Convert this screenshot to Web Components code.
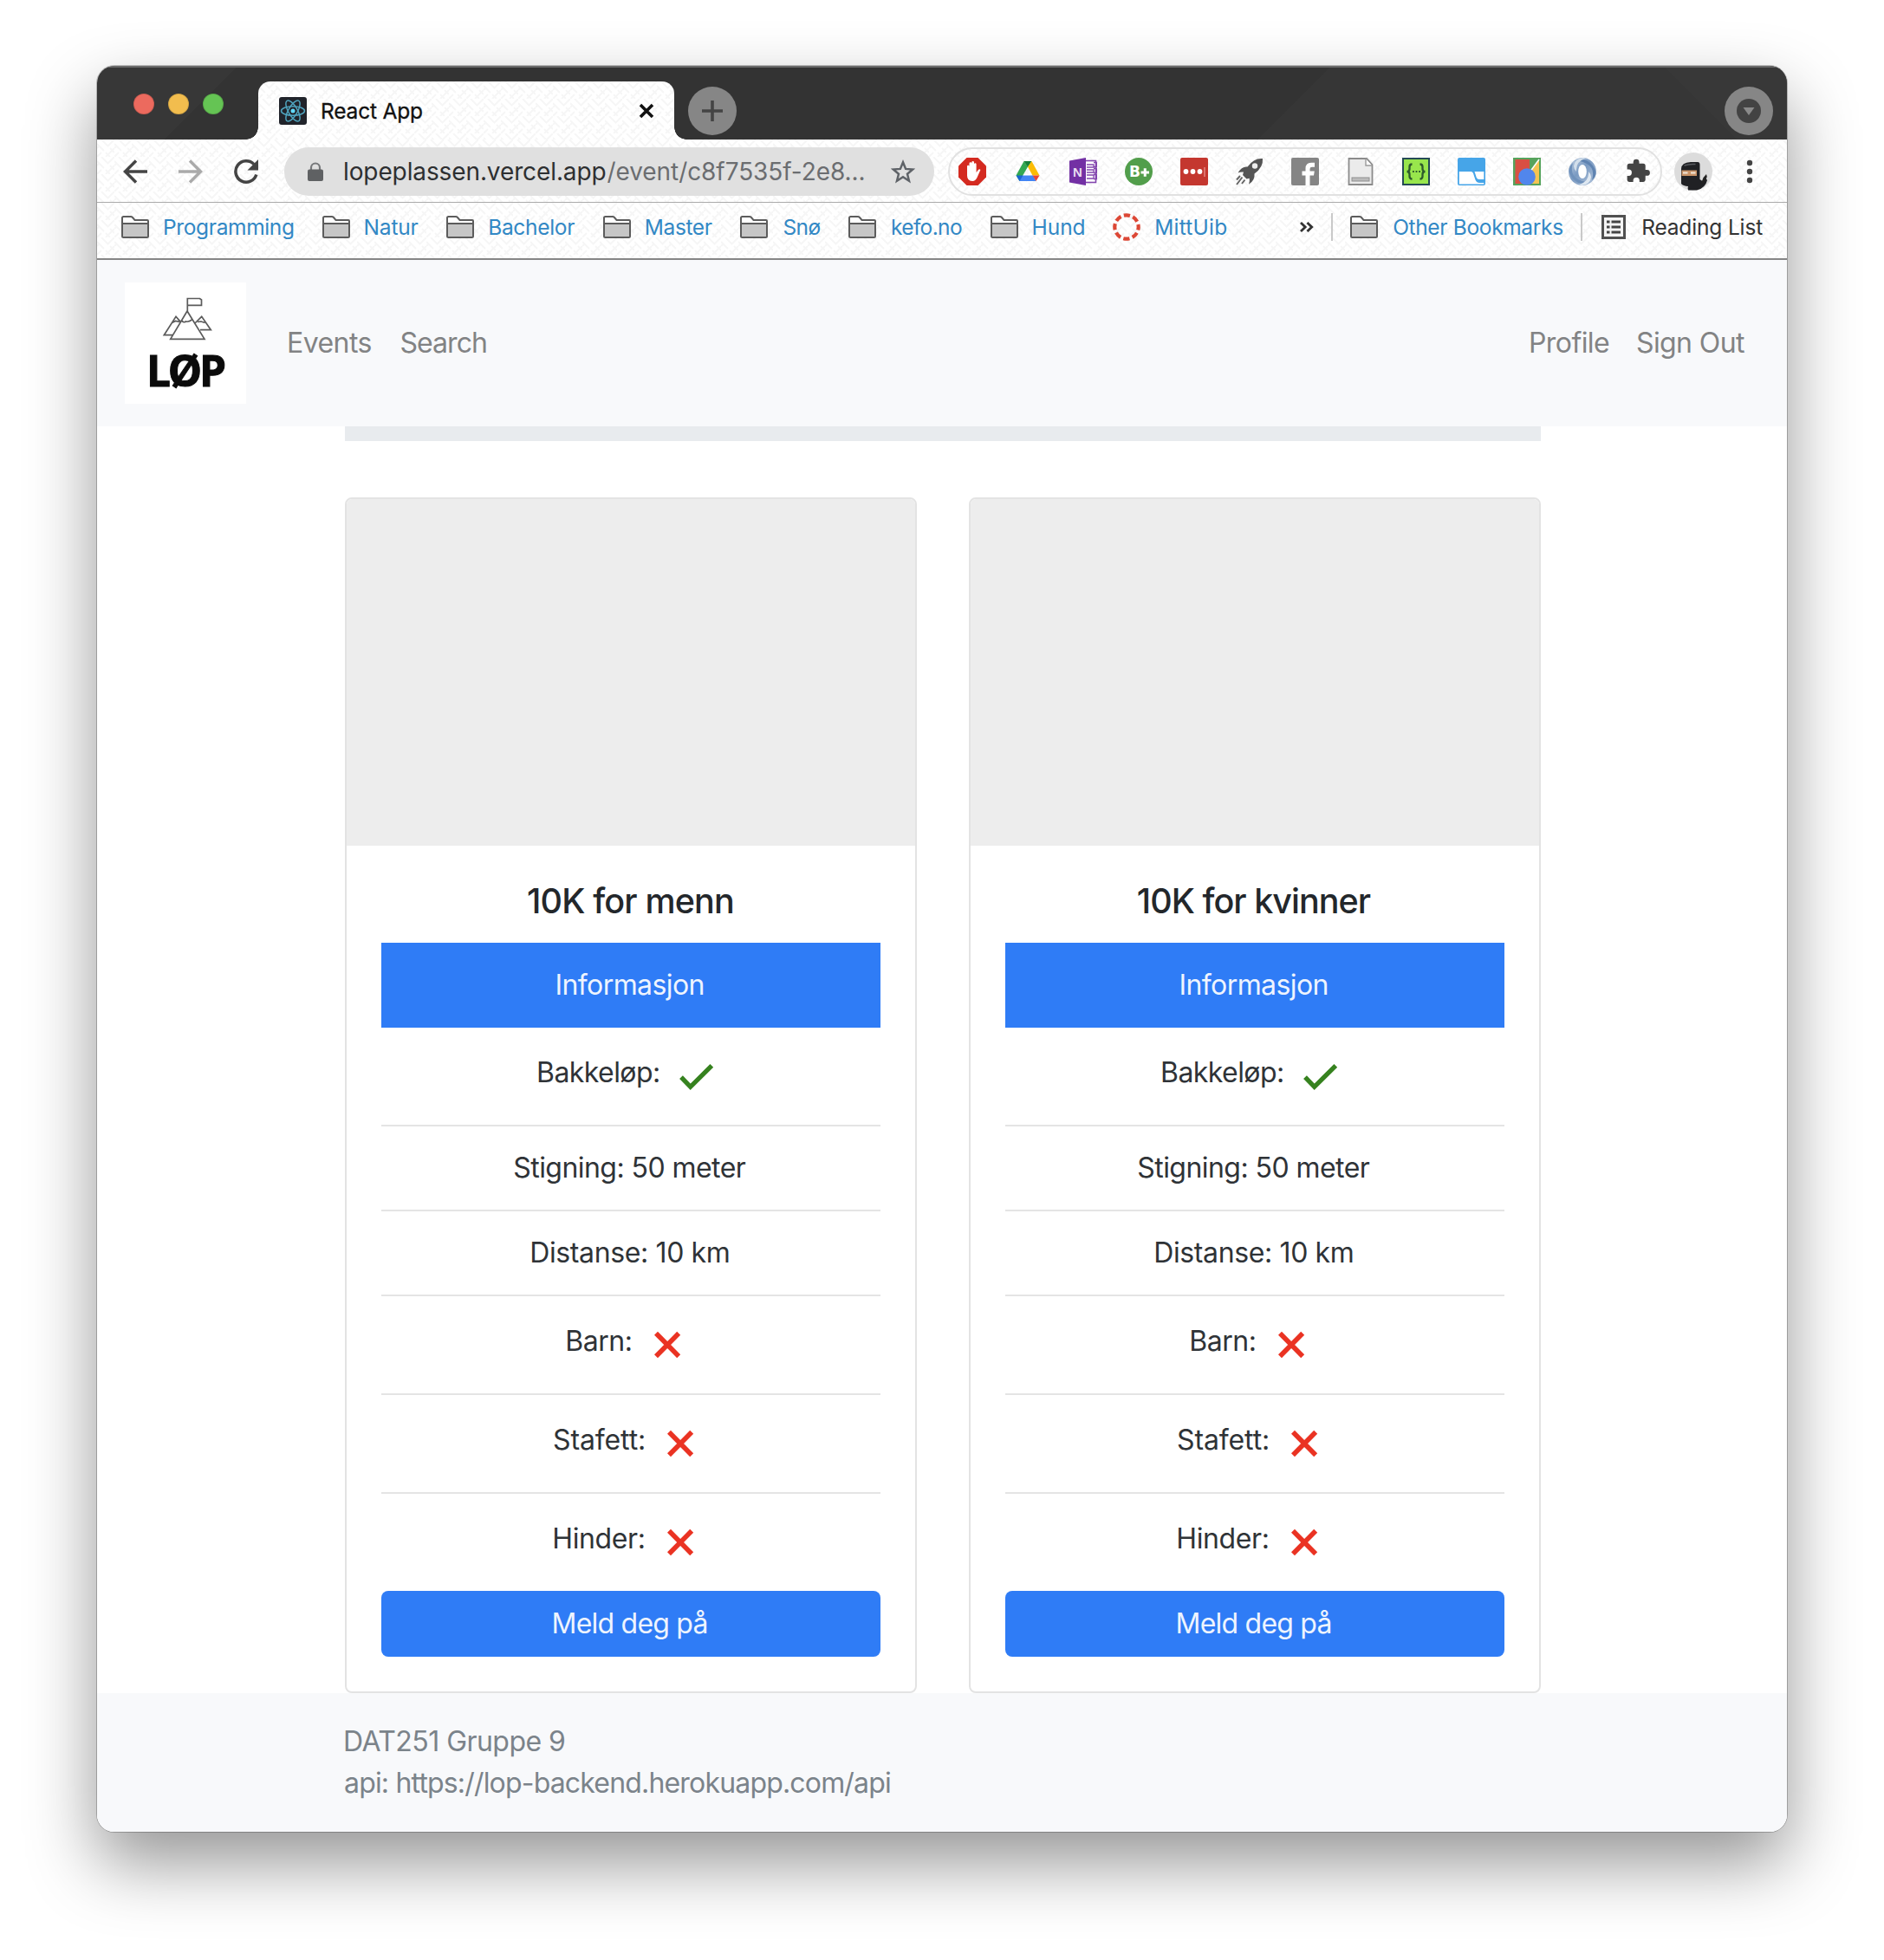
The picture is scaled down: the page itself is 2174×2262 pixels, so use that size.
<!DOCTYPE html>
<html lang="no">
<head>
<meta charset="utf-8">
<title>React App</title>
<style>
html,body{margin:0;background:#fff}
body{width:2174px;height:2262px;overflow:hidden;padding:76px 112px 0;box-sizing:border-box;font-family:Inter,"Liberation Sans",sans-serif;color:#212529}
</style>
</head>
<body>
<browser-window>
  <tab-strip></tab-strip>
  <tool-bar></tool-bar>
  <bookmark-bar></bookmark-bar>
  <site-nav></site-nav>
  <event-page>
    <race-card heading="10K for menn" w="236"></race-card>
    <race-card heading="10K for kvinner" w="269"></race-card>
  </event-page>
  <site-footer></site-footer>
</browser-window>
<script>
function define(tag, css, html, init) {
  const tpl = document.createElement('template');
  customElements.define(tag, class extends HTMLElement {
    connectedCallback() {
      if (this.shadowRoot) return;
      const root = this.attachShadow({ mode: 'open' });
      tpl.innerHTML = '<style>:host,*{box-sizing:border-box}' + css + '</style>' + (typeof html === 'function' ? html(this) : html);
      root.append(tpl.content.cloneNode(true));
      if (init) init(this, root);
    }
  });
}

/* Text whose visible glyphs span exactly `w` pixels. */
const ctx = document.createElement('canvas').getContext('2d');
define('fit-text', ':host{display:inline-block;white-space:pre;flex:none}span{display:inline-block}', '<span><slot></slot></span>', (host, root) => {
  const w = +host.getAttribute('w'), cs = getComputedStyle(host), t = host.textContent;
  ctx.font = cs.fontWeight + ' ' + cs.fontSize + ' ' + cs.fontFamily;
  const m = ctx.measureText(t);
  const ink = m.actualBoundingBoxLeft + m.actualBoundingBoxRight;
  const span = root.querySelector('span');
  host.style.width = w + 'px';
  span.style.letterSpacing = (w - ink) / (t.length - 1) + 'px';
  span.style.marginLeft = m.actualBoundingBoxLeft + 'px';
});

const hex = '<path d="M9.5 0h13L32 9.5v13L22.500 32h-13L0 22.500v-13z" fill="#d42a20"/>';
const icons = {
  react: [32, 32, '<rect width="32" height="32" rx="3" fill="#20232a"/><g fill="none" stroke="#4fa3bd" stroke-width="1.500"><ellipse cx="16" cy="16" rx="13.500" ry="5.200"/><ellipse cx="16" cy="16" rx="13.500" ry="5.200" transform="rotate(60 16 16)"/><ellipse cx="16" cy="16" rx="13.500" ry="5.200" transform="rotate(120 16 16)"/></g><circle cx="16" cy="16" r="2.500" fill="#61dafb"/>'],
  close: [18, 18, '<path d="M2 2l14 14M16 2L2 16" stroke="#111" stroke-width="3.600"/>'],
  plus: [56, 56, '<circle cx="28" cy="28" r="28" fill="#868686"/><path d="M28 16v24M16 28h24" stroke="#444" stroke-width="3.600"/>'],
  down: [56, 56, '<circle cx="28" cy="28" r="28" fill="#868686"/><circle cx="28" cy="28" r="14" fill="#434343"/><path d="M21.500 24h13L28 33z" fill="#8a8a8a"/>'],
  back: [28, 28, '<path d="M28 14H3M15 1.500L2.500 14 15 26.500" fill="none" stroke="#444" stroke-width="3.500"/>'],
  fwd: [28, 28, '<path d="M0 14h25M13 1.500L25.500 14 13 26.500" fill="none" stroke="#aaa" stroke-width="3.500"/>'],
  reload: [28, 28, '<path d="M25.800 17.500A12.200 12.200 0 1 1 23 5.600" fill="none" stroke="#444" stroke-width="3.500"/><path d="M28 0v12.500H15.500z" fill="#444"/>'],
  lock: [18, 22, '<path d="M4 10V6.500a5 5 0 0 1 10 0V10" fill="none" stroke="#77797b" stroke-width="2.200"/><rect y="8.500" width="18" height="13.500" rx="2" fill="#5f6163"/>'],
  star: [28, 28, '<path d="M14 3.300l3.100 7.600 8.100.6-6.200 5.200 2 8L14 20.300l-7 4.400 2-8-6.200-5.200 8.100-.6z" fill="none" stroke="#5f6368" stroke-width="2.500"/>'],
  hand: [32, 32, hex + '<path d="M10 14.500l0-4.500q0-1.300 1.200-1.300t1.300 1.300V6.500q.1-1.300 1.400-1.300t1.400 1.300V5.400q.1-1.300 1.400-1.300T18 5.400v2q.1-1.200 1.300-1.200t1.300 1.200V17l2.500-3.200q1.200-1 2.300.2l-3.600 8.300q-1.800 4.700-5.800 4.700-6 0-6-6.500z" fill="#fff"/>'],
  drive: [32, 32, '<g transform="translate(2.500 3.500)"><path d="M9 .5L0 17l4 6.500L13.500 7z" fill="#33a852"/><path d="M9 .5h9L13.500 7.500z" fill="#188038"/><path d="M18 .5L27 17h-8L13.500 7z" fill="#fbbc04"/><path d="M0 17h8l3.500 6.500H4z" fill="#1967d2"/><path d="M8 17h11.500l3.500 6.500H4z" fill="#4285f4"/><path d="M19 17h8l-4 6.500z" fill="#ea4335"/></g>'],
  onenote: [32, 32, '<rect x="18" y="3.500" width="12.500" height="25" fill="#fff" stroke="#8245ad" stroke-width="1.600"/><path d="M20 8h8v3h-8m0 3h8v3h-8m0 3h8v4h-8M28 5.500h3.500v5H28m0 2h3.500v5H28m0 2h3.500v5H28" fill="none" stroke="#8245ad" stroke-width="1.300"/><path d="M0 3.500L19 0v32L0 28.500z" fill="#7330a4"/><text x="4" y="22" font-family="Liberation Sans" font-weight="700" font-size="15" fill="#e9dcf1">N</text>'],
  bplus: [32, 32, '<circle cx="16" cy="16" r="16" fill="#529e4b"/><text x="5" y="22" font-family="DejaVu Sans" font-weight="700" font-size="17" fill="#fff">B</text><path d="M18.500 17h9.500M23.250 12.300v9.400" stroke="#fff" stroke-width="3"/>'],
  dots: [32, 32, '<rect width="32" height="32" rx="2" fill="#c4372f"/><circle cx="6.500" cy="16" r="2.900" fill="#fff"/><circle cx="14.500" cy="16" r="2.900" fill="#fff"/><circle cx="22.500" cy="16" r="2.900" fill="#fff"/><path d="M28 11v11" stroke="#ef9c97" stroke-width="1.200"/>'],
  rocket: [32, 32, '<path d="M31 1Q21 0 13.500 10.500 7 9.500 2.500 17.500q3-1.500 6.500-1L8 20l4.500 4.500 3.200-.8q.6 3.300-.7 7Q22.500 26 21.500 18.500 32 11 31 1z" fill="#555"/><circle cx="22" cy="9.500" r="3.200" fill="#eee"/><path d="M7.500 22.500L1 31M5 21l-4 4.500M10.500 25.500L7 30" stroke="#666" stroke-width="2"/>'],
  fb: [32, 32, '<rect width="32" height="32" rx="2" fill="#858585"/><path d="M16.500 32V20.500h-4V15.500h4v-3q0-6.800 6.500-6.800h4v5h-3q-2.500 0-2.500 2.300v2.500h5.300l-.8 5h-4.500V32z" fill="#fff"/>'],
  doc: [32, 32, '<path d="M2.500 1H23l6.500 7v23h-27z" fill="#ebebeb" stroke="#8b8b8b" stroke-width="1.800"/><path d="M22 1.500V9h7" fill="#fff" stroke="#9a9a9a" stroke-width="1.400"/><rect x="6" y="23" width="20" height="4" fill="#bbb" stroke="#8f8f8f"/>'],
  braces: [32, 32, '<rect x="1" y="1" width="30" height="30" fill="#98e64c" stroke="#254a55" stroke-width="2"/><path d="M11.500 7.500q-3 0-3 3v2.500q0 3-3 3 3 0 3 3v2.500q0 3 3 3M20.500 7.500q3 0 3 3v2.500q0 3 3 3-3 0-3 3v2.500q0 3-3 3" fill="none" stroke="#2d5a2c" stroke-width="2.300"/><path d="M12 16h9" stroke="#2d5a2c" stroke-width="1.800" stroke-dasharray="1.800 1.800"/>'],
  bluewin: [32, 32, '<rect width="32" height="32" rx="2" fill="#46a5e8"/><path d="M1.800 16h13.500q2 0 2.700 2l2.300 7q1.300 4 5 4h5v1.500H1.800z" fill="#fff"/><path d="M19.500 16h10.800v9H25q-2.500 0-3.200-2z" fill="#fff"/>'],
  gsearch: [32, 32, '<rect width="32" height="32" fill="#56a35c"/><path d="M2.500 2H19v28H2.500z" fill="#d94f43"/><path d="M30 3v27H19V16z" fill="#f4c453"/><path d="M19 17L30 2" stroke="#fff" stroke-width="1.500"/><circle cx="16" cy="22" r="9.800" fill="#5186ec"/>'],
  swirl: [32, 32, '<defs><linearGradient id="a" x1="0" y1="0" x2="1" y2="1"><stop offset="0" stop-color="#c3d2e3"/><stop offset=".45" stop-color="#7a9ac2"/><stop offset="1" stop-color="#b4c6dc"/></linearGradient></defs><circle cx="16" cy="16" r="16" fill="url(#a)"/><path d="M7 4Q18-2 27 8t0 18Q31 12 21 7 14 3 7 4z" fill="#5f83b1"/><path d="M25 28Q14 34 5 24T5 6Q1 20 11 25 18 29 25 28z" fill="#6f91bb"/><path d="M12 31Q24 28 23 16 29 22 23 29 18 33 12 31z" fill="#dfe8f1"/><path d="M20 1Q8 4 9 16 3 10 9 3 14-1 20 1z" fill="#d3dfeb"/><ellipse cx="16" cy="16" rx="4.800" ry="8" fill="#fff"/>'],
  puzzle: [32, 32, '<path d="M25.500 14H23.700V9.300q0-2.500-2.500-2.500H16.500V5.200a3.400 3.400 0 0 0-6.800 0v1.600H5q-2.400 0-2.400 2.500v4.300h1.700a3.600 3.600 0 0 1 0 7.300H2.600v4.700Q2.600 28 5 28h4.600v-1.700a3.600 3.600 0 0 1 7.200 0V28h4.400q2.500 0 2.500-2.400v-4.800h1.800a3.400 3.400 0 0 0 0-6.800z" fill="#444" transform="translate(1 0)"/>'],
  ninja: [44, 44, '<circle cx="22" cy="22" r="22" fill="#dcdcdc"/><path d="M8 19Q8 11.500 19 11h8q2.500 0 2.500 3v17l3 2 3.500-4 2 3q-2 9-12 11.500H16q-1-2 0-4.500-6-.5-8-3z" fill="#202124"/><path d="M30.500 37l3-8L37 25l.8 3-3 6.500z" fill="#222"/><path d="M8.500 20.500H26v6.500H8.500z" fill="#c99468"/><path d="M10 23.500h5.500m3.500 0h5.500" stroke="#f0e6da" stroke-width="2"/><path d="M11.500 15q5-2 13-1.500" stroke="#595b5f" stroke-width="1.500" fill="none"/>'],
  menu: [8, 28, '<circle cx="4" cy="4" r="3.200" fill="#444"/><circle cx="4" cy="14" r="3.200" fill="#444"/><circle cx="4" cy="24" r="3.200" fill="#444"/>'],
  folder: [32, 26, '<path d="M1 9V2.500Q1 1 2.500 1H11q1 0 1.800.8L15.500 5H30q1 0 1 1v3" fill="#fff" stroke="#5c5c5c" stroke-width="2"/><path d="M1 9h30v14.500q0 1.500-1.500 1.500h-27Q1 25 1 23.500z" fill="#c6c6c6" stroke="#5c5c5c" stroke-width="2"/>'],
  ring: [32, 32, '<circle cx="16" cy="16" r="13.700" fill="none" stroke="#dc4735" stroke-width="4.200" stroke-dasharray="7.300 3.460" stroke-dashoffset="3.650"/>'],
  chevrons: [16, 12, '<path d="M1 1l5.200 5L1 11M8.500 1l5.200 5-5.200 5" fill="none" stroke="#333" stroke-width="2.800"/>'],
  list: [28, 28, '<rect x="1.500" y="1.500" width="25" height="25" fill="#f4f4f4" stroke="#505050" stroke-width="3"/><path d="M6 8h3.500m2 0H22M6 14h3.500m2 0H22M6 20h3.500m2 0H22" stroke="#444" stroke-width="2.800"/>'],
  yes: [48, 48, '<path d="M7 25.200l10.700 11.100L42.300 11.800" fill="none" stroke="#36821f" stroke-width="5.300"/>'],
  no: [48, 48, '<path d="M11 10.700l26.200 26.600M37.200 10.700L11 37.300" stroke="#ea3323" stroke-width="5.600"/>']
};
define('app-icon', ':host{display:block;flex:none}svg{display:block}', h => {
  const [w, hh, body] = icons[h.getAttribute('name')];
  return `<svg width="${w}" height="${hh}" viewBox="0 0 ${w} ${hh}">${body}</svg>`;
});

const weave = `url("data:image/svg+xml,%3Csvg xmlns='http://www.w3.org/2000/svg' width='20' height='20'%3E%3Cg stroke='%23f6f6f6' stroke-width='2' fill='none'%3E%3Cpath d='M0 5l8 8M5 0l8 8M10 15l5 5M15 10l5 5M12 8l8-8M10 20l10-10M0 20l5-5M0 10l2-2'/%3E%3C/g%3E%3C/svg%3E")`;

define('browser-window', `:host{display:flex;flex-direction:column;width:1950px;height:2038px;border-radius:20px;box-shadow:0 0 0 1px rgba(0,0,0,.22),0 36px 80px rgba(0,0,0,.42)}
.in{display:flex;flex-direction:column;height:100%;border-radius:20px;overflow:hidden;background:#fff}`, '<div class="in"><slot></slot></div>');

define('tab-strip', `:host{display:flex;height:85px;background:linear-gradient(#6a6a6a 2px,transparent 2px),linear-gradient(45deg,transparent 93%,#383838 93%),linear-gradient(135deg,#373737 8%,#333 8% 70%,#363636 70%);align-items:flex-end;flex:none}
.lights{display:flex;gap:16px;padding:0 0 29px 42px;width:172px}
i{width:24px;height:24px;border-radius:50%;border:1px solid rgba(0,0,0,.12)}
.fl{width:14px;height:14px;background:radial-gradient(circle at 0 0,transparent 13.500px,#fff 14px)}
.fr{background:radial-gradient(circle at 100% 0,transparent 13.500px,#fff 14px)}
.tab{width:480px;height:67px;border-radius:14px 14px 0 0;background:${weave} #fff;display:flex;align-items:center;padding:0 23px 0 24px;color:#111;font-size:24.500px;line-height:32px}
fit-text{margin-left:18px;-webkit-text-stroke:.3px #111}
.x{margin-left:auto}
.plus{margin:0 0 5px 2px;align-self:flex-end}
.down{margin:0 16px 5px auto}`,
`<div class="lights"><i style="background:#ec6a5e"></i><i style="background:#f2bd4e"></i><i style="background:#65c454"></i></div><div class="fl"></div>
<div class="tab"><app-icon name="react"></app-icon><fit-text w="115">React App</fit-text><app-icon class="x" name="close"></app-icon></div><div class="fl fr"></div>
<app-icon class="plus" name="plus"></app-icon><app-icon class="down" name="down"></app-icon>`);

define('tool-bar', `:host{display:flex;height:73px;flex:none;background:${weave} #fff;border-bottom:1px solid #aaa;align-items:center;padding:1px 0 0 30px}
.nav{display:flex;gap:36px;width:186px}
.omni{display:flex;align-items:center;width:750px;height:56px;border-radius:28px;background:#e0e0e0;padding:0 22px 0 27px;font-size:28px;line-height:36px;color:#2d2f31}
.omni fit-text:first-of-type{margin:0 2px 0 25px}.path{color:#6b6d70}.star{margin-left:auto}
.ext{display:flex;gap:32px;align-items:center;width:824px;height:56px;border:2px solid #e1e1e1;border-radius:28px;margin-left:16px;padding-left:10px}
.av{margin-left:14px}.menu{margin-left:39px}`,
`<div class="nav"><app-icon name="back"></app-icon><app-icon name="fwd"></app-icon><app-icon name="reload"></app-icon></div>
<div class="omni"><app-icon name="lock"></app-icon><fit-text w="300.500">lopeplassen.vercel.app</fit-text><fit-text class="path" w="296">/event/c8f7535f-2e8...</fit-text><app-icon class="star" name="star"></app-icon></div>
<div class="ext">${['hand','drive','onenote','bplus','dots','rocket','fb','doc','braces','bluewin','gsearch','swirl','puzzle'].map(n => `<app-icon name="${n}"></app-icon>`).join('')}</div>
<app-icon class="av" name="ninja"></app-icon><app-icon class="menu" name="menu"></app-icon>`);

define('bookmark-item', ':host{display:flex;align-items:center;gap:18px;flex:none}',
  h => `<app-icon name="${h.getAttribute('icon') || 'folder'}"></app-icon><fit-text w="${h.getAttribute('w')}">${h.getAttribute('label')}</fit-text>`);
define('bookmark-bar', `:host{display:flex;height:66px;flex:none;background:${weave} #fff;border-bottom:2px solid #868686;align-items:center;padding:0 0 9px 28px;font-size:24.500px;line-height:30px;color:#3288c5}
.row{display:flex;gap:32.600px}.chev{margin-left:85px}hr{width:2px;height:32px;margin:0;border:0;background:#c9c9c9}
.rl{color:#333;margin-left:22px;gap:20px}`,
`<div class="row">${[['Programming',149],['Natur',61],['Bachelor',98],['Master',76],['Snø',42],['kefo.no',81],['Hund',59]].map(([t,w]) => `<bookmark-item label="${t}" w="${w}"></bookmark-item>`).join('')}<bookmark-item icon="ring" label="MittUib" w="81"></bookmark-item></div>
<app-icon class="chev" name="chevrons"></app-icon><hr style="margin:0 20px"><bookmark-item label="Other Bookmarks" w="195"></bookmark-item><hr style="margin-left:21px"><bookmark-item class="rl" icon="list" label="Reading List" w="138"></bookmark-item>`);

define('site-nav', `:host{display:flex;height:192px;flex:none;background:#f8f9fb;align-items:center;padding:0 49px 0 32px;font-size:32px;line-height:48px;color:#828384}
svg{background:#fff;margin-right:49px}.b{margin-left:34px}.p{margin-left:auto}.s{margin-left:32px}`,
`<svg width="140" height="140" viewBox="0 0 140 140"><g fill="none" stroke="#5b5b5b" stroke-width="1.700"><path d="M72.300 33V18.500H86.500L88.500 20v6.300H72.300M72 33L52.700 65.300H92zM65.500 43.500q2 3.500 5 1.500 3 1 7-2M65 46l-6-6.700-13.700 21.400H55M59 39.300L64.500 46M54.500 46.500l4-2 4.500 1M81 47l7.700-7.700 10.600 15.400H87M84 45.500l4-.5 4.500 1.500"/></g><text x="25" y="119.500" font-family="Open Sans" font-weight="700" font-size="49.500" textLength="92" fill="#0b0b0b" stroke="#0b0b0b" stroke-width="1">LØP</text></svg>
<fit-text w="95.500">Events</fit-text><fit-text class="b" w="98.500">Search</fit-text><fit-text class="p" w="91">Profile</fit-text><fit-text class="s" w="124">Sign Out</fit-text>`);

define('event-page', `:host{display:flex;flex-direction:column;height:1462px;flex:none;background:#fff;padding-left:286px}
.bar{width:1380px;height:17px;flex:none;background:#e8ebee}.cards{display:flex;gap:60px;margin-top:65px;width:1380px}`,
'<div class="bar"></div><div class="cards"><slot></slot></div>');

define('race-row', `:host{display:flex;height:98px;flex:none;align-items:center;justify-content:center;border-bottom:2px solid #e4e4e4;padding-right:2px}
:host([mark]){height:114px;padding-right:8px}:host([mark]) fit-text{padding-bottom:8px}:host([last]){height:112px;border:0}
app-icon{margin-left:19px}:host([mark=no]) app-icon{margin-left:18px}`,
  h => `<fit-text w="${h.getAttribute('w')}">${h.getAttribute('label')}</fit-text>${h.hasAttribute('mark') ? `<app-icon name="${h.getAttribute('mark')}"></app-icon>` : ''}`);

define('race-card', `:host{display:flex;flex-direction:column;width:660px;height:1380px;border:2px solid #e3e3e3;border-radius:8px;background:#fff;font-size:32px;line-height:48px;color:#2f3337;overflow:hidden}
.img{height:400px;background:#ededed;flex:none}.body{display:flex;flex-direction:column;padding:40px}
.h{height:72px;padding-right:2px;line-height:48px;text-align:center;font-size:39.500px;font-weight:500;color:#23272b}
.info,.btn{background:#2f7cf6;color:#eef4fe;display:flex;align-items:center;justify-content:center;padding-right:2px}
.info{height:98px}.btn{height:76px;border-radius:8px}`,
  h => `<div class="img"></div><div class="body"><div class="h"><fit-text w="${h.getAttribute('w')}">${h.getAttribute('heading')}</fit-text></div>
<div class="info"><fit-text w="169">Informasjon</fit-text></div>
<race-row label="Bakkeløp:" w="139" mark="yes"></race-row><race-row label="Stigning: 50 meter" w="267.500"></race-row><race-row label="Distanse: 10 km" w="227.500"></race-row>
<race-row label="Barn:" w="73.500" mark="no"></race-row><race-row label="Stafett:" w="104" mark="no"></race-row><race-row label="Hinder:" w="103.500" mark="no" last></race-row>
<div class="btn"><fit-text w="177">Meld deg på</fit-text></div></div>`);

define('site-footer', `:host{display:flex;flex-direction:column;flex:1;background:#f8f9fb;padding:32px 0 0 286px;font-size:32px;line-height:48px;color:#7b838a}`,
'<fit-text w="253">DAT251 Gruppe 9</fit-text><fit-text w="629">api: https://lop-backend.herokuapp.com/api</fit-text>');
</script>
</body>
</html>
